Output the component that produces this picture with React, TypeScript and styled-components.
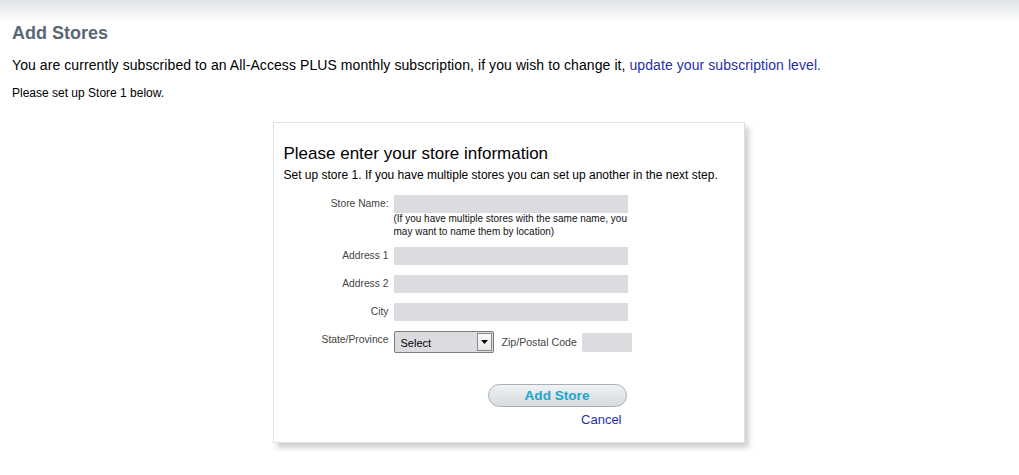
import React from "react";
import styled, { createGlobalStyle } from "styled-components";

const Global = createGlobalStyle`
  html, body { margin: 0; padding: 0; background: #fff; }
  body { font-family: Arial, "Liberation Sans", sans-serif; color: #000; }
`;

const Page = styled.div`
  background: linear-gradient(to bottom, #dfe3e6 0px, #f4f5f6 14px, #ffffff 24px);
  min-height: 475px;
  padding: 22px 12px 0 12px;
  box-sizing: border-box;
`;

const Title = styled.h1`
  margin: 0;
  font-size: 18px;
  font-weight: bold;
  color: #5a6775;
  line-height: 22px;
`;

const Intro = styled.p`
  margin: 12px 0 0 0;
  font-size: 14px;
  line-height: 18px;
  letter-spacing: 0.08px;
`;

const Link = styled.a`
  color: #1f2fa8;
  text-decoration: none;
`;

const Small = styled.p`
  margin: 12px 0 0 0;
  font-size: 12px;
  line-height: 14px;
`;

const Center = styled.div`
  display: flex;
  justify-content: center;
  margin-top: 22px;
  padding-right: 2px;
`;

const Card = styled.div`
  width: 450px;
  border: 1px solid #dde1e4;
  background: #fff;
  padding: 21px 10px 15px 10px;
  box-shadow: 4px 5px 5px rgba(0, 0, 0, 0.18);
`;

const CardTitle = styled.h2`
  margin: 0;
  font-size: 17px;
  font-weight: normal;
  line-height: 20px;
`;

const CardSub = styled.p`
  margin: 3px 0 0 0;
  font-size: 12px;
  line-height: 16px;
`;

const Form = styled.div`
  margin-top: 12px;
  display: grid;
  grid-template-columns: 105px auto;
  column-gap: 5px;
  row-gap: 10px;
  align-items: start;
`;

const Label = styled.label`
  font-size: 10.3px;
  color: #444;
  text-align: right;
  line-height: 18px;
`;

const Field = styled.div`
  display: flex;
  flex-direction: column;
`;

const Input = styled.div<{ $w?: number; $h?: number }>`
  width: ${(p) => p.$w ?? 234}px;
  height: ${(p) => p.$h ?? 18}px;
  background: #dcdce0;
`;

const Note = styled.div`
  font-size: 10px;
  line-height: 13px;
  margin-top: -1px;
  margin-bottom: -1px;
  color: #111;
`;

const Inline = styled.div`
  display: flex;
  align-items: center;
`;

const Select = styled.div`
  width: 98px;
  height: 20px;
  border: 1px solid #7a7a7a;
  border-radius: 2px;
  background: #dcdce0;
  display: flex;
  align-items: center;
  justify-content: space-between;
  font-size: 11px;
`;

const SelectText = styled.span`
  padding-left: 6px;
  padding-top: 2px;
`;

const Arrow = styled.span`
  width: 15px;
  height: 18px;
  border: 1px solid #8a8a8a;
  background: linear-gradient(#fafafa, #e6e6e6);
  display: flex;
  align-items: center;
  justify-content: center;
  margin-right: 1px;
  box-sizing: border-box;
`;

const ZipLabel = styled.span`
  font-size: 10.6px;
  color: #444;
  margin: 0 5px 0 8px;
`;

const Actions = styled.div`
  display: flex;
  flex-direction: column;
  align-items: flex-end;
  margin-top: 31px;
  padding-right: 107px;
`;

const Button = styled.button`
  width: 139px;
  height: 23px;
  border-radius: 12px;
  border: 1px solid #a9b0b6;
  background: linear-gradient(#f1f3f4 0%, #e2e6e9 50%, #d7dcdf 100%);
  color: #1ba6cf;
  font-family: Arial, "Liberation Sans", sans-serif;
  font-weight: bold;
  font-size: 13.6px;
  padding: 0;
  cursor: pointer;
`;

const Cancel = styled.a`
  margin-top: 5px;
  margin-right: 5px;
  font-size: 13px;
  color: #1f2fa8;
  text-decoration: none;
`;

export default function App() {
  return (
    <>
      <Global />
      <Page>
        <Title>Add Stores</Title>
        <Intro>
          You are currently subscribed to an All-Access PLUS monthly subscription, if you wish to change it,{" "}
          <Link href="#">update your subscription level.</Link>
        </Intro>
        <Small>Please set up Store 1 below.</Small>
        <Center>
          <Card>
            <CardTitle>Please enter your store information</CardTitle>
            <CardSub>Set up store 1. If you have multiple stores you can set up another in the next step.</CardSub>
            <Form>
              <Label>Store Name:</Label>
              <Field>
                <Input />
                <Note>
                  (If you have multiple stores with the same name, you
                  <br />
                  may want to name them by location)
                </Note>
              </Field>
              <Label>Address 1</Label>
              <Input />
              <Label>Address 2</Label>
              <Input />
              <Label>City</Label>
              <Input />
              <Label>State/Province</Label>
              <Inline>
                <Select>
                  <SelectText>Select</SelectText>
                  <Arrow>
                    <svg width="7" height="4" viewBox="0 0 7 4">
                      <path d="M0 0H7L3.5 4Z" fill="#000" />
                    </svg>
                  </Arrow>
                </Select>
                <ZipLabel>Zip/Postal Code</ZipLabel>
                <Input $w={50} $h={19} />
              </Inline>
            </Form>
            <Actions>
              <Button>Add Store</Button>
              <Cancel href="#">Cancel</Cancel>
            </Actions>
          </Card>
        </Center>
      </Page>
    </>
  );
}
